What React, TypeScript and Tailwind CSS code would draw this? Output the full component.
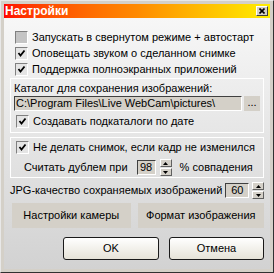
import React from "react";

function CheckBox({ checked }: { checked: boolean }) {
  return (
    <span
      className={
        "w-[13px] h-[13px] shrink-0 flex items-center justify-center border border-t-[#808080] border-l-[#808080] border-b-white border-r-white " +
        (checked ? "bg-[#e4e4e4]" : "bg-[#c4c4c4]")
      }
    >
      {checked && (
        <svg width="9" height="9" viewBox="0 0 9 9">
          <path d="M1.5 4 L3.5 6.5 L7.5 1.5" fill="none" stroke="#000" strokeWidth="1.8" />
        </svg>
      )}
    </span>
  );
}

function Spinner() {
  return (
    <div className="flex flex-col gap-px">
      <span className="w-[12px] h-[8px] flex items-center justify-center bg-[#d4d0c8] border border-t-white border-l-white border-b-[#606060] border-r-[#606060]">
        <svg width="5" height="3" viewBox="0 0 5 3">
          <path d="M2.5 0 L5 3 L0 3 Z" fill="#000" />
        </svg>
      </span>
      <span className="w-[12px] h-[8px] flex items-center justify-center bg-[#d4d0c8] border border-t-white border-l-white border-b-[#606060] border-r-[#606060]">
        <svg width="5" height="3" viewBox="0 0 5 3">
          <path d="M0 0 L5 0 L2.5 3 Z" fill="#000" />
        </svg>
      </span>
    </div>
  );
}

function NumBox({ value, width }: { value: string; width: string }) {
  return (
    <div
      className={
        width +
        " h-[15px] flex items-center justify-center bg-[#d4d0c8] border border-t-[#404040] border-l-[#404040] border-b-white border-r-white text-[11px]"
      }
    >
      {value}
    </div>
  );
}

export default function App() {
  return (
    <div
      className="w-[274px] h-[273px] bg-[#d4d0c8] border border-t-[#e8e8e8] border-l-[#e8e8e8] border-b-[#303030] border-r-[#303030] p-[3px] flex flex-col text-black"
      style={{ fontFamily: '"Liberation Sans", Arial, sans-serif' }}
    >
      {/* Title bar */}
      <div className="h-[14px] shrink-0 flex items-center justify-between bg-gradient-to-r from-[#ff0000] via-[#ff8a00] to-[#ffee00] pl-[1px] pr-[2px]">
        <span className="text-white font-bold text-[12px] leading-none">Настройки</span>
        <span className="w-[12px] h-[10px] flex items-center justify-center bg-[#d4d0c8] border border-t-white border-l-white border-b-[#404040] border-r-[#404040]">
          <svg width="6" height="6" viewBox="0 0 6 6">
            <path d="M0.5 0.5 L5.5 5.5 M5.5 0.5 L0.5 5.5" stroke="#000" strokeWidth="1.6" />
          </svg>
        </span>
      </div>

      {/* Body */}
      <div className="flex-1 bg-gradient-to-b from-[#f7f7f7] to-[#d2d2d2] flex flex-col px-[6px] pt-[13px] text-[11px] leading-none whitespace-nowrap">
        <div className="flex flex-col gap-[3px] pl-[5px]">
          <label className="flex items-center gap-[4px] h-[13px]">
            <CheckBox checked={false} />
            <span>Запускать в свернутом режиме + автостарт</span>
          </label>
          <label className="flex items-center gap-[4px] h-[13px]">
            <CheckBox checked />
            <span>Оповещать звуком о сделанном снимке</span>
          </label>
          <label className="flex items-center gap-[4px] h-[13px]">
            <CheckBox checked />
            <span>Поддержка полноэкранных приложений</span>
          </label>
        </div>

        {/* Catalog group */}
        <div className="mt-[2px] border border-white px-[3px] pt-[4px] pb-[4px] flex flex-col">
          <span>Каталог для сохранения изображений:</span>
          <div className="mt-[2px] flex items-center gap-[2px]">
            <div className="flex-1 h-[15px] flex items-center bg-[#d4d0c8] border border-t-[#404040] border-l-[#404040] border-b-white border-r-white px-[1px] text-[11px]">
              C:\Program Files\Live WebCam\pictures\
            </div>
            <div className="w-[16px] h-[15px] flex items-end justify-center pb-[3px] bg-[#d4d0c8] text-[11px]">...</div>
          </div>
          <label className="mt-[4px] flex items-center gap-[4px] h-[13px] pl-[2px]">
            <CheckBox checked />
            <span>Создавать подкаталоги по дате</span>
          </label>
        </div>

        {/* Duplicate group */}
        <div className="mt-[4px] border border-white px-[5px] pt-[3px] pb-[1px] flex flex-col">
          <label className="flex items-center gap-[4px] h-[13px]">
            <CheckBox checked />
            <span>Не делать снимок, если кадр не изменился</span>
          </label>
          <div className="mt-[5px] flex items-center pl-[8px]">
            <span>Считать дублем при</span>
            <div className="ml-[9px] flex items-center gap-[4px]">
              <NumBox value="98" width="w-[19px]" />
              <Spinner />
            </div>
            <span className="ml-[8px]">% совпадения</span>
          </div>
        </div>

        {/* JPG quality */}
        <div className="mt-[4px] flex items-center">
          <span>JPG-качество сохраняемых изображений</span>
          <div className="ml-[3px] flex items-center gap-[3px]">
            <NumBox value="60" width="w-[24px]" />
            <Spinner />
          </div>
        </div>

        {/* Flat buttons */}
        <div className="mt-[4px] flex gap-[7px] pl-[2px]">
          <div className="w-[120px] h-[25px] flex items-center justify-center bg-[#d4d0c8]">Настройки камеры</div>
          <div className="w-[128px] h-[25px] flex items-center justify-center bg-[#d4d0c8]">Формат изображения</div>
        </div>

        {/* OK / Cancel */}
        <div className="mt-[9px] flex gap-[10px] pl-[53px]">
          <div className="w-[96px] h-[23px] flex items-center justify-center rounded-[3px] border border-[#1a1a1a] bg-gradient-to-b from-white to-[#e6e3d8]">
            OK
          </div>
          <div className="w-[95px] h-[23px] flex items-center justify-center rounded-[3px] border border-[#1a1a1a] bg-gradient-to-b from-white to-[#e6e3d8]">
            Отмена
          </div>
        </div>
      </div>
    </div>
  );
}
